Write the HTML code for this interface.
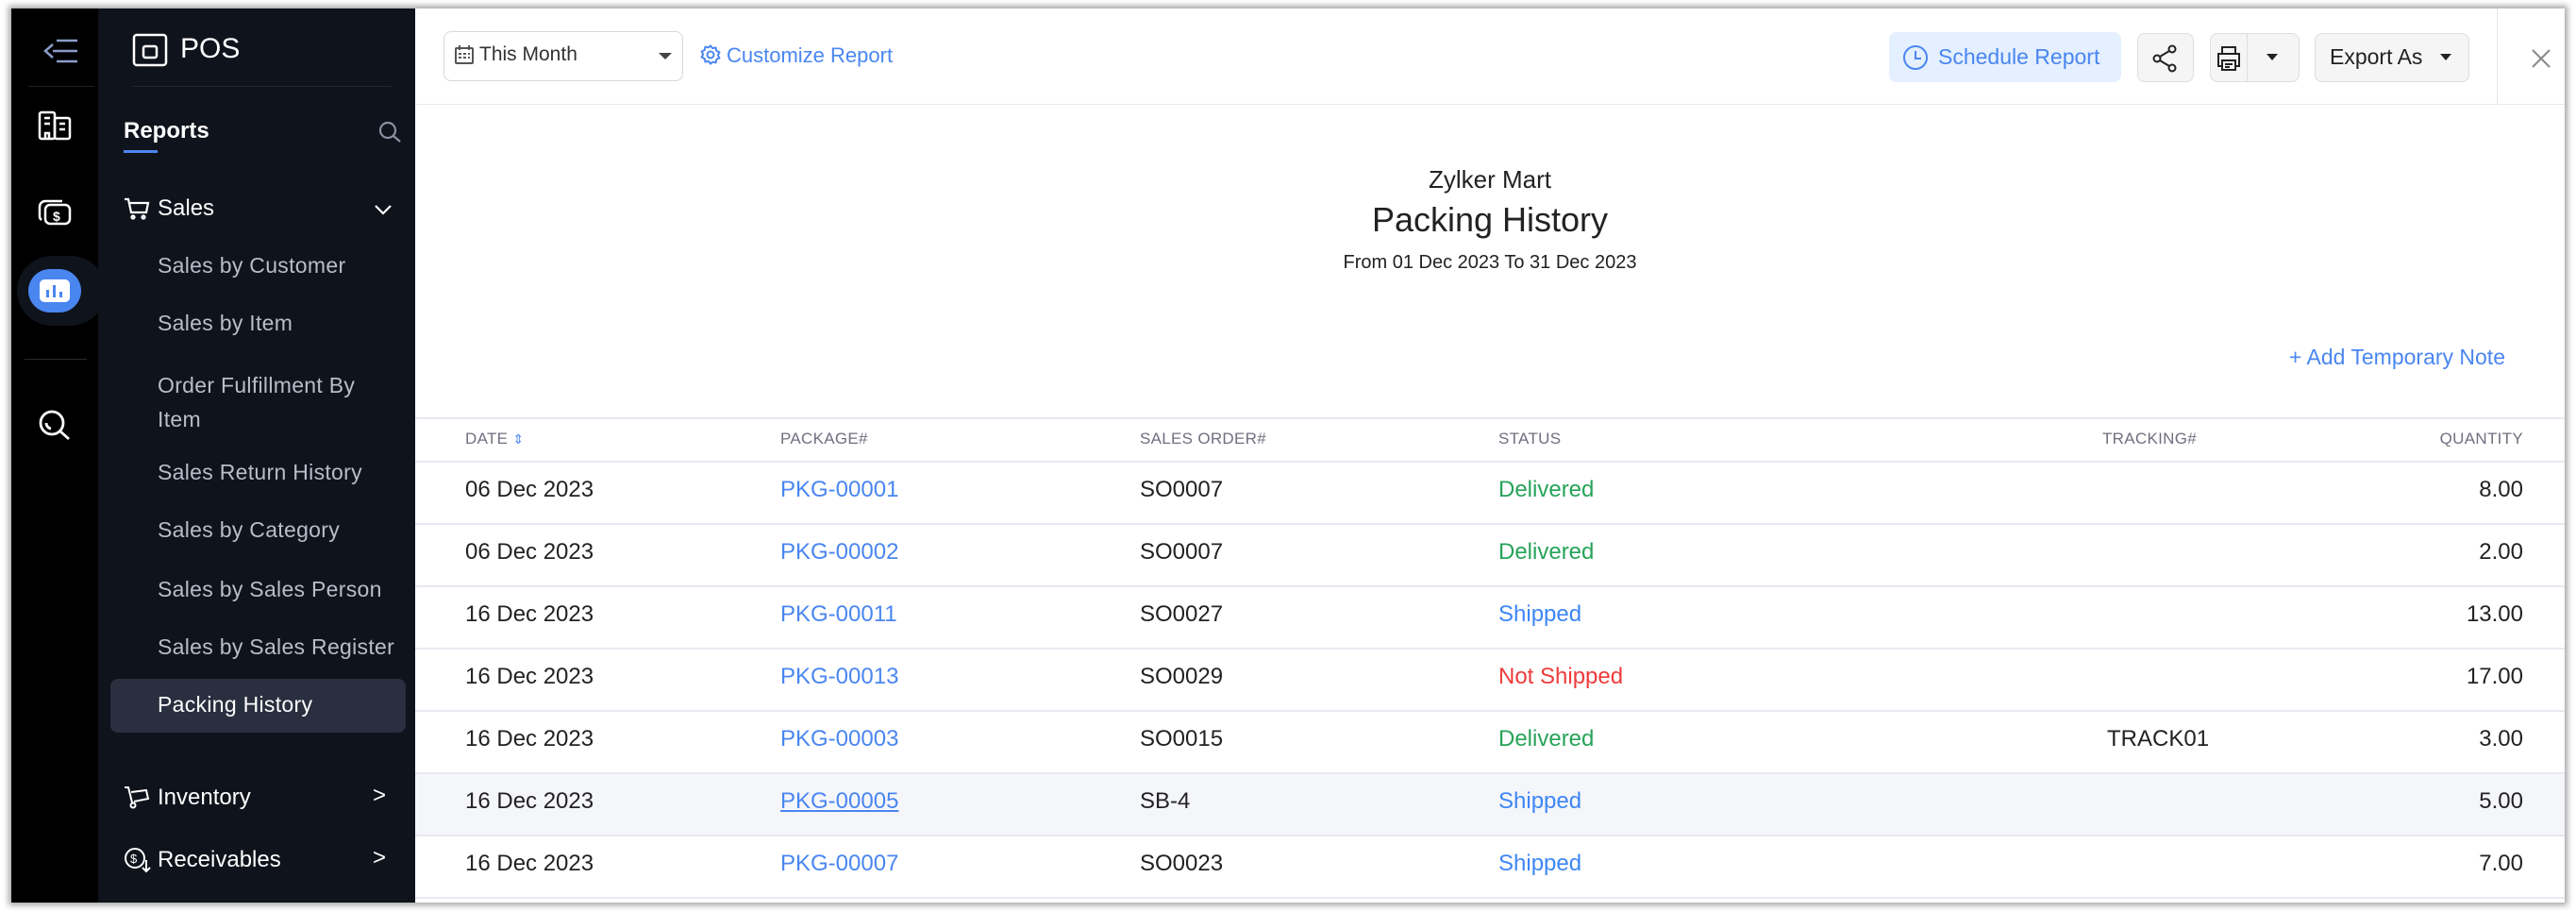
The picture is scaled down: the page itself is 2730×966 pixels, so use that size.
<!DOCTYPE html>
<html><head><meta charset="utf-8"><style>
*{box-sizing:border-box;margin:0;padding:0}
body{width:2730px;height:966px;background:#fff;font-family:"Liberation Sans",sans-serif;position:relative;overflow:hidden}
.frame{position:absolute;left:12px;top:9px;width:2706px;height:947px;box-shadow:0 0 6px 3px rgba(0,0,0,.35);background:#fff;overflow:hidden}
.rail{position:absolute;left:0;top:0;width:92px;height:100%;background:#000}
.side{position:absolute;left:92px;top:0;width:336px;height:100%;background:#0f131c;overflow:hidden}
.sc{position:absolute;left:-12px;top:0;width:348px;height:100%}
.main{position:absolute;left:428px;top:0;right:0;height:100%;background:#fff;overflow:hidden}
.mc{position:absolute;left:0;top:0;width:2290px;height:100%;transform:translateX(-12px)}
.a{position:absolute;white-space:nowrap}
.si{position:absolute;left:75px;color:#b9bdc8;font-size:23px;white-space:nowrap;letter-spacing:.3px}
.th{position:absolute;top:446px;font-size:17px;color:#6f6f80;letter-spacing:.3px}
.row{position:absolute;left:0;right:0;height:66px;border-bottom:2px solid #e8e9f0}
.row span{position:absolute;top:15px;font-size:24px;color:#222;white-space:nowrap}
.row .p{color:#4a86f0}
.g{color:#27a35a!important}.b{color:#3d86f5!important}.r{color:#ee3b3b!important}
.btn{position:absolute;top:26px;height:52px;border:1px solid #dcdde2;border-radius:8px;background:#f5f5f6}
</style></head><body><div class="frame">
<div class="rail">
 <svg class="a" style="left:32px;top:30px" width="40" height="30" viewBox="0 0 40 30" fill="none" stroke="#8a9bc9" stroke-width="2.5"><path d="M12 15H38M16 4H38M16 26H38M12 8L4 15L12 22"/></svg>
 <div class="a" style="left:18px;top:82px;width:70px;height:1px;background:#222"></div>
 <svg class="a" style="left:28px;top:108px" width="36" height="32" viewBox="0 0 36 32" fill="none" stroke="#fff" stroke-width="2.5"><rect x="2" y="2" width="16" height="28" rx="2"/><rect x="18" y="8" width="16" height="22" rx="2"/><path d="M7 8h6M7 14h6M23 14h6M23 20h6M8 30v-6h4v6"/></svg>
 <svg class="a" style="left:28px;top:200px" width="36" height="32" viewBox="0 0 36 32" fill="none" stroke="#fff" stroke-width="2.5"><rect x="8" y="8" width="26" height="20" rx="5"/><path d="M4 24a5 5 0 0 1-2-4V10a6 6 0 0 1 6-6h18"/><text x="16" y="25" font-size="14" fill="#fff" stroke="none" font-family="Liberation Sans" font-weight="bold">$</text></svg>
 <div class="a" style="left:6px;top:262px;width:94px;height:74px;border-radius:37px;background:#0f131c"></div>
 <div class="a" style="left:18px;top:276px;width:56px;height:46px;border-radius:23px;background:#4a86f0"></div>
 <svg class="a" style="left:29px;top:286px" width="34" height="26" viewBox="0 0 34 26"><rect x="1" y="1" width="32" height="24" rx="5" fill="#fff"/><rect x="8" y="12" width="3" height="8" fill="#4a86f0"/><rect x="15" y="7" width="3" height="13" fill="#4a86f0"/><rect x="22" y="14" width="3" height="6" fill="#4a86f0"/></svg>
 <div class="a" style="left:14px;top:371px;width:66px;height:1px;background:#2a2a2a"></div>
 <svg class="a" style="left:28px;top:424px" width="36" height="36" viewBox="0 0 36 36" fill="none" stroke="#fff" stroke-width="2.8"><circle cx="15" cy="15" r="12"/><path d="M24 24L33 32M9 15a6 6 0 0 0 5 6"/></svg>
</div>
<div class="side"><div class="sc">
 <svg class="a" style="left:48px;top:26px" width="40" height="36" viewBox="0 0 40 36" fill="none" stroke="#fff" stroke-width="2.5"><rect x="2" y="2" width="34" height="32" rx="3"/><rect x="12" y="14" width="14" height="12" rx="2"/></svg>
 <div class="a" style="left:99px;top:26px;color:#fff;font-size:30px">POS</div>
 <div class="a" style="left:48px;top:82px;width:275px;height:1px;background:#222736"></div>
 <div class="a" style="left:39px;top:116px;color:#fff;font-size:24px;font-weight:bold">Reports</div>
 <div class="a" style="left:39px;top:150px;width:36px;height:3px;background:#4a86f0"></div>
 <svg class="a" style="left:308px;top:118px" width="26" height="26" viewBox="0 0 26 26" fill="none" stroke="#8a90a0" stroke-width="2.2"><circle cx="11" cy="11" r="8"/><path d="M17 17l7 6"/></svg>
 <svg class="a" style="left:39px;top:200px" width="28" height="24" viewBox="0 0 28 24" fill="none" stroke="#fff" stroke-width="2.2"><path d="M1 2h4l3 14h16l2-10H7"/><circle cx="10" cy="21" r="1.5"/><circle cx="21" cy="21" r="1.5"/></svg>
 <div class="a" style="left:75px;top:198px;color:#fff;font-size:24px">Sales</div>
 <svg class="a" style="left:304px;top:207px" width="20" height="12" viewBox="0 0 20 12" fill="none" stroke="#fff" stroke-width="2.2"><path d="M2 2l8 8 8-8"/></svg>
 <div class="si" style="top:259px">Sales by Customer</div>
 <div class="si" style="top:320px">Sales by Item</div>
 <div class="si" style="top:381px;line-height:36px;white-space:normal;width:240px">Order Fulfillment By Item</div>
 <div class="si" style="top:478px">Sales Return History</div>
 <div class="si" style="top:539px">Sales by Category</div>
 <div class="si" style="top:602px">Sales by Sales Person</div>
 <div class="si" style="top:663px">Sales by Sales Register</div>
 <div class="a" style="left:25px;top:710px;width:313px;height:57px;border-radius:8px;background:#2a2f3f"></div>
 <div class="si" style="top:724px;color:#fff">Packing History</div>
 <svg class="a" style="left:39px;top:822px" width="28" height="26" viewBox="0 0 28 26" fill="none" stroke="#fff" stroke-width="2"><path d="M1 3h4l4 16M8 8l16-2 2 9-15 3"/><circle cx="10" cy="22" r="2.5"/></svg>
 <div class="a" style="left:75px;top:822px;color:#fff;font-size:24px">Inventory</div>
 <div class="a" style="left:303px;top:820px;color:#fff;font-size:24px">&gt;</div>
 <svg class="a" style="left:39px;top:888px" width="30" height="28" viewBox="0 0 30 28" fill="none" stroke="#fff" stroke-width="2"><circle cx="12" cy="12" r="10"/><text x="7" y="17" font-size="13" fill="#fff" stroke="none" font-family="Liberation Sans">$</text><path d="M24 14v12M20 22l4 4 4-4"/></svg>
 <div class="a" style="left:75px;top:888px;color:#fff;font-size:24px">Receivables</div>
 <div class="a" style="left:303px;top:886px;color:#fff;font-size:24px">&gt;</div>
</div></div>
<div class="main">
 <div class="a" style="left:0;right:0;top:101px;height:1px;background:#e6e7ec"></div>
 <div class="a" style="left:2206px;top:0;width:1px;height:101px;background:#e6e7ec"></div>
 <div class="a" style="left:0;right:0;top:433px;height:2px;background:#e8e9f0"></div>
 <div class="a" style="left:0;right:0;top:479px;height:2px;background:#e8e9f0"></div>
 <div class="mc">
 <div class="a" style="left:42px;top:24px;width:254px;height:53px;border:1px solid #d7d8dd;border-radius:8px"></div>
 <svg class="a" style="left:54px;top:39px" width="20" height="20" viewBox="0 0 20 20" fill="#555"><rect x="1" y="3" width="18" height="16" rx="1" fill="none" stroke="#555" stroke-width="2"/><rect x="4" y="0" width="2" height="5"/><rect x="14" y="0" width="2" height="5"/><rect x="4" y="8" width="3" height="2"/><rect x="9" y="8" width="3" height="2"/><rect x="14" y="8" width="2" height="2"/><rect x="4" y="12" width="3" height="2"/><rect x="9" y="12" width="3" height="2"/><rect x="14" y="12" width="2" height="2"/></svg>
 <div class="a" style="left:80px;top:37px;font-size:21px;color:#333">This Month</div>
 <div class="a" style="left:270px;top:47px;width:0;height:0;border-left:7px solid transparent;border-right:7px solid transparent;border-top:7px solid #444"></div>
 <svg class="a" style="left:314px;top:38px" width="22" height="22" viewBox="0 0 22 22" fill="none" stroke="#4a86f0" stroke-width="2"><circle cx="11" cy="11" r="3.5"/><path d="M11 1.5l2.2 2.6 3.3-.6.8 3.3 3 1.6-1.4 3 1.4 3-3 1.6-.8 3.3-3.3-.6L11 20.5l-2.2-2.6-3.3.6-.8-3.3-3-1.6 1.4-3-1.4-3 3-1.6.8-3.3 3.3.6z"/></svg>
 <div class="a" style="left:342px;top:37px;font-size:22px;color:#4a86f0">Customize Report</div>
 <div class="a" style="left:1574px;top:25px;width:246px;height:53px;border-radius:8px;background:#e4efff"></div>
 <svg class="a" style="left:1588px;top:38px" width="28" height="28" viewBox="0 0 28 28" fill="none" stroke="#4a86f0" stroke-width="2"><circle cx="14" cy="14" r="12"/><path d="M14 7v8h6"/></svg>
 <div class="a" style="left:1626px;top:38px;font-size:23px;color:#4a86f0">Schedule Report</div>
 <div class="btn" style="left:1837px;width:60px"></div>
 <svg class="a" style="left:1853px;top:38px" width="28" height="30" viewBox="0 0 28 30" fill="none" stroke="#222" stroke-width="2"><circle cx="21" cy="5" r="3.5"/><circle cx="5" cy="15" r="3.5"/><circle cx="21" cy="25" r="3.5"/><path d="M8 13l10-6M8 17l10 6"/></svg>
 <div class="btn" style="left:1914px;width:95px"></div>
 <div class="a" style="left:1953px;top:26px;width:1px;height:52px;background:#dcdde2"></div>
 <svg class="a" style="left:1921px;top:39px" width="26" height="28" viewBox="0 0 26 28" fill="none" stroke="#222" stroke-width="2"><path d="M6 8V2h14v6M6 22H2V9h22v13h-4"/><rect x="6" y="16" width="14" height="10"/><path d="M9 20h8M9 23h5"/></svg>
 <div class="a" style="left:1974px;top:48px;width:0;height:0;border-left:6px solid transparent;border-right:6px solid transparent;border-top:7px solid #222"></div>
 <div class="btn" style="left:2025px;width:164px"></div>
 <div class="a" style="left:2041px;top:38px;font-size:23px;color:#222">Export As</div>
 <div class="a" style="left:2158px;top:48px;width:0;height:0;border-left:6px solid transparent;border-right:6px solid transparent;border-top:7px solid #222"></div>
 <svg class="a" style="left:2254px;top:42px" width="22" height="22" viewBox="0 0 22 22" stroke="#888" stroke-width="2"><path d="M2 2l18 18M20 2L2 20"/></svg>
 <div class="a" style="left:12px;width:2278px;top:166px;text-align:center;font-size:26px;color:#222">Zylker Mart</div>
 <div class="a" style="left:12px;width:2278px;top:203px;text-align:center;font-size:36px;color:#222">Packing History</div>
 <div class="a" style="left:12px;width:2278px;top:258px;text-align:center;font-size:20px;color:#222">From 01 Dec 2023 To 31 Dec 2023</div>
 <div class="a" style="right:63px;top:356px;font-size:23px;color:#4a86f0">+ Add Temporary Note</div>
 <div class="th" style="left:65px">DATE <span style="color:#4a86f0;font-size:14px">&#8661;</span></div>
 <div class="th" style="left:399px">PACKAGE#</div>
 <div class="th" style="left:780px">SALES ORDER#</div>
 <div class="th" style="left:1160px">STATUS</div>
 <div class="th" style="left:1800px">TRACKING#</div>
 <div class="th" style="right:44px">QUANTITY</div>
 <div class="row" style="top:481px"><span style="left:65px">06 Dec 2023</span><span class="p" style="left:399px">PKG-00001</span><span style="left:780px">SO0007</span><span class="g" style="left:1160px">Delivered</span><span style="right:44px">8.00</span></div>
 <div class="row" style="top:547px"><span style="left:65px">06 Dec 2023</span><span class="p" style="left:399px">PKG-00002</span><span style="left:780px">SO0007</span><span class="g" style="left:1160px">Delivered</span><span style="right:44px">2.00</span></div>
 <div class="row" style="top:613px"><span style="left:65px">16 Dec 2023</span><span class="p" style="left:399px">PKG-00011</span><span style="left:780px">SO0027</span><span class="b" style="left:1160px">Shipped</span><span style="right:44px">13.00</span></div>
 <div class="row" style="top:679px"><span style="left:65px">16 Dec 2023</span><span class="p" style="left:399px">PKG-00013</span><span style="left:780px">SO0029</span><span class="r" style="left:1160px">Not Shipped</span><span style="right:44px">17.00</span></div>
 <div class="row" style="top:745px"><span style="left:65px">16 Dec 2023</span><span class="p" style="left:399px">PKG-00003</span><span style="left:780px">SO0015</span><span class="g" style="left:1160px">Delivered</span><span style="left:1805px">TRACK01</span><span style="right:44px">3.00</span></div>
 <div class="row" style="top:811px;background:#f5f6fa"><span style="left:65px">16 Dec 2023</span><span class="p" style="left:399px;text-decoration:underline">PKG-00005</span><span style="left:780px">SB-4</span><span class="b" style="left:1160px">Shipped</span><span style="right:44px">5.00</span></div>
 <div class="row" style="top:877px"><span style="left:65px">16 Dec 2023</span><span class="p" style="left:399px">PKG-00007</span><span style="left:780px">SO0023</span><span class="b" style="left:1160px">Shipped</span><span style="right:44px">7.00</span></div>
 </div>
</div>
</div></body></html>
